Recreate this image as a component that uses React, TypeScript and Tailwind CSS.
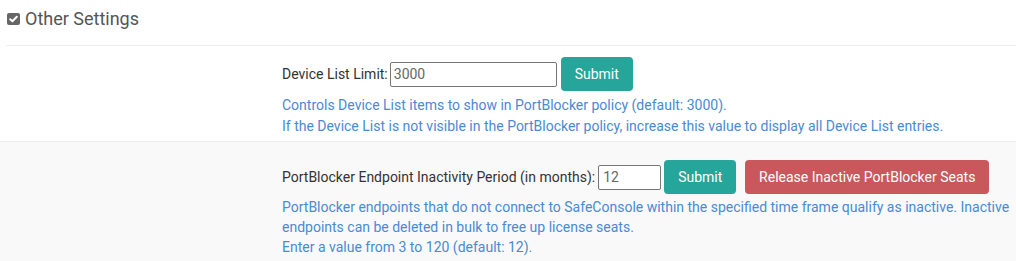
import React from 'react';

const CheckSquare = () => (
  <svg width="13" height="12" viewBox="0 0 13 12" className="shrink-0">
    <rect x="0" y="0" width="13" height="12" rx="2" fill="#666666" />
    <path d="M3.2 6.2 L5.4 8.3 L9.8 3.8" stroke="#ffffff" strokeWidth="2" fill="none" strokeLinecap="round" strokeLinejoin="round" />
  </svg>
);

export default function App() {
  return (
    <div className="w-[1016px] h-[261px] bg-white overflow-hidden font-['Roboto',sans-serif] text-[14px] text-[#333]">
      <div className="flex items-center gap-[5px] pl-[7px] h-[36px] pt-[1px]">
        <CheckSquare />
        <span className="text-[18px] text-[#555]">Other Settings</span>
      </div>
      <div className="ml-[6px] border-t border-[#eeeeee] mt-[9px]" />

      <div className="pl-[282px] pt-[11px] pb-[5px] h-[95px]">
        <div className="flex items-center">
          <span>Device List Limit:</span>
          <input
            defaultValue="3000"
            className="ml-[2px] w-[167px] h-[25px] border border-[#767676] rounded-[2px] px-[3px] text-[#666] outline-none"
          />
          <button className="ml-[4px] w-[72px] h-[34px] rounded-[4px] bg-[#26a69a] text-white">
            Submit
          </button>
        </div>
        <div className="mt-[4px] text-[#4a8ad4] leading-[21px]">
          <p>Controls Device List items to show in PortBlocker policy (default: 3000).</p>
          <p>If the Device List is not visible in the PortBlocker policy, increase this value to display all Device List entries.</p>
        </div>
      </div>

      <div className="border-t border-[#eeeeee] bg-[#f9f9f9] pl-[282px] pt-[18px] h-[120px]">
        <div className="flex items-center">
          <span>PortBlocker Endpoint Inactivity Period (in months):</span>
          <input
            defaultValue="12"
            className="ml-[3px] w-[63px] h-[25px] border border-[#767676] rounded-[2px] px-[4px] bg-white text-[#666] outline-none"
          />
          <button className="ml-[3px] w-[72px] h-[34px] rounded-[4px] bg-[#26a69a] text-white">
            Submit
          </button>
          <button className="ml-[9px] w-[244px] h-[34px] rounded-[4px] bg-[#c9585c] text-white">
            Release Inactive PortBlocker Seats
          </button>
        </div>
        <div className="mt-[3px] text-[#4a8ad4] leading-[20px] pr-[6px]">
          <p>PortBlocker endpoints that do not connect to SafeConsole within the specified time frame qualify as inactive. Inactive endpoints can be deleted in bulk to free up license seats.</p>
          <p>Enter a value from 3 to 120 (default: 12).</p>
        </div>
      </div>
    </div>
  );
}
